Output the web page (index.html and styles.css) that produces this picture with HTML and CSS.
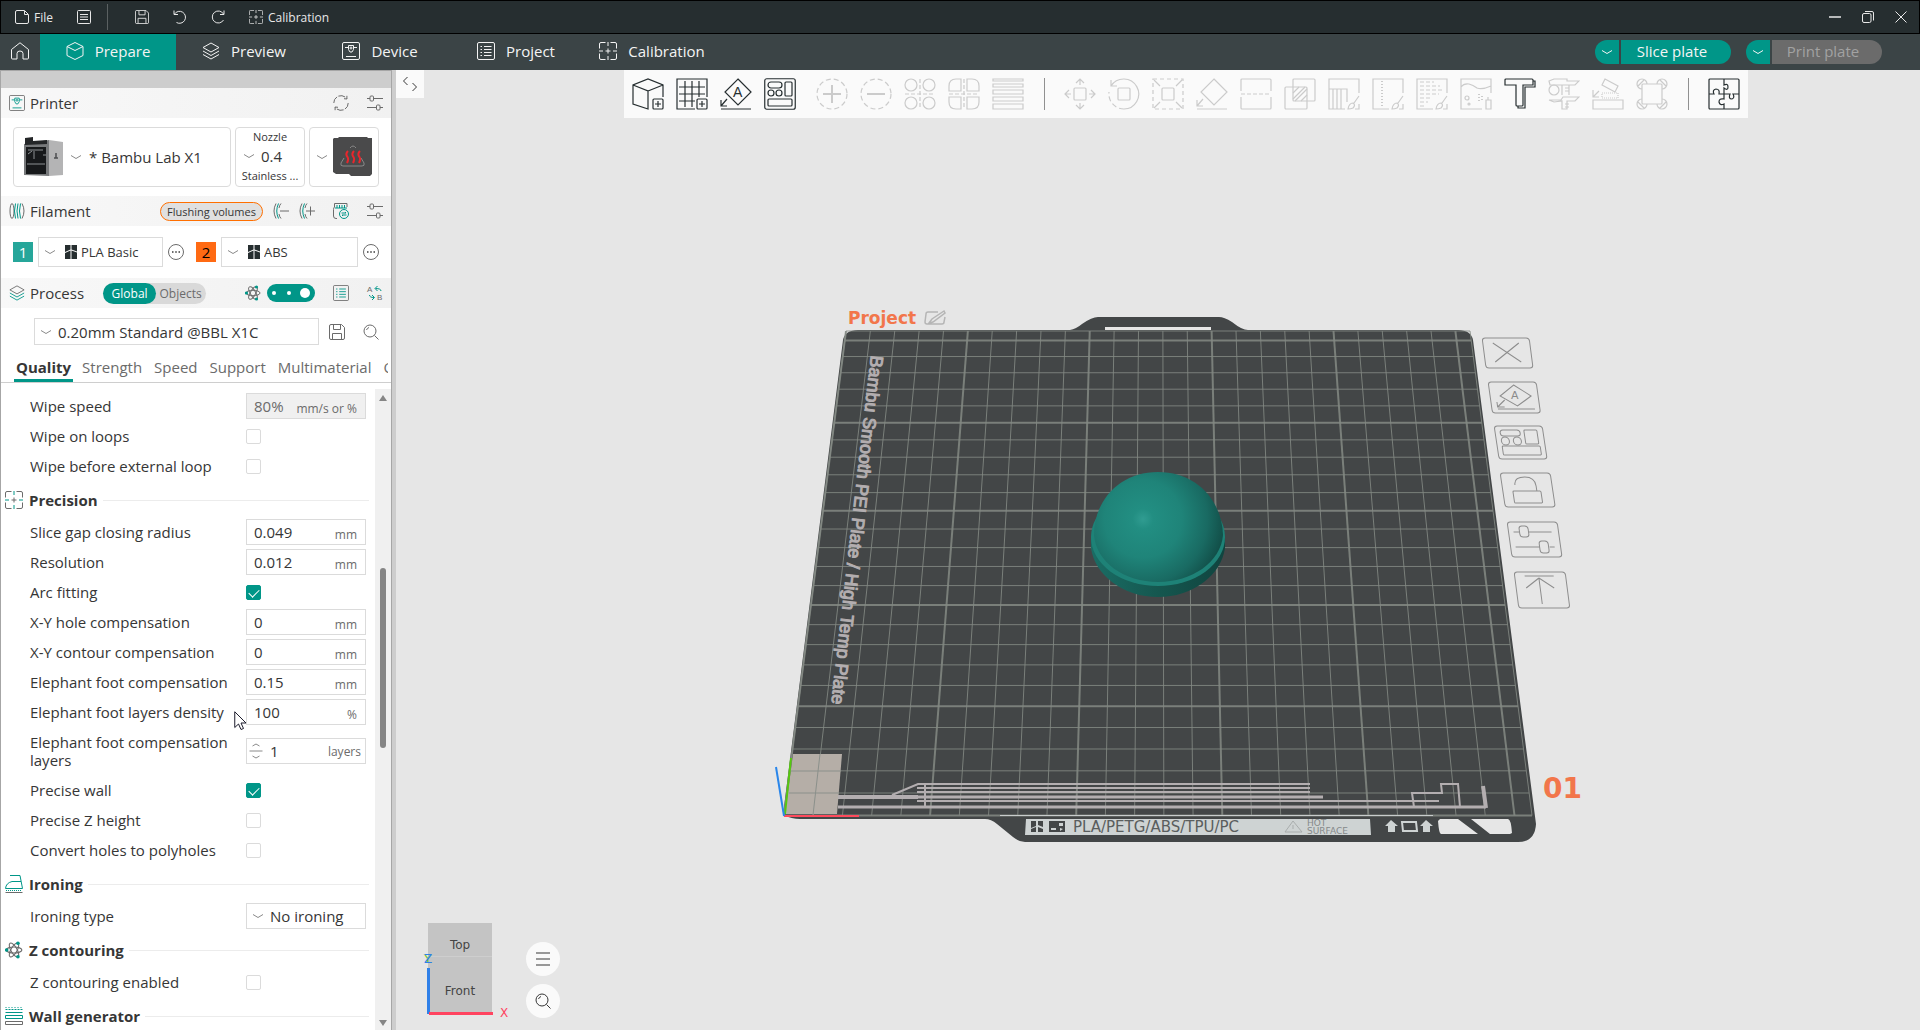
FILE: index.html
```html
<!DOCTYPE html>
<html lang="en">
<head>
  <meta charset="UTF-8" />
  <title>Project</title>
  <link rel="stylesheet" href="styles.css">
</head>
<body>
  <!-- shared icons -->
  <svg class="defs" aria-hidden="true">
    <symbol id="i-chevron" viewBox="0 0 12 6"><path d="M1 1.5L6 4.5L11 1.5" /></symbol>
    <symbol id="i-save" viewBox="0 0 16 16"><path d="M.5 2Q.5.5 2 .5H12.5L15.5 3.5V14Q15.5 15.5 14 15.5H2Q.5 15.5 .5 14ZM4.5 1V5.5H11.5V1M3.500 15V9.500H12.500V15" /></symbol>
    <symbol id="i-calib" viewBox="0 0 18 18"><path class="main" d="M.5 6.500V2Q.5.5 2 .5H6.500M11.500.5H16Q17.500.5 17.500 2V6.500M17.500 11.500V16Q17.500 17.500 16 17.500H11.500M6.500 17.500H2Q.5 17.500 .5 16V11.500M9 6.500V11.500M6.500 9H11.500" /><path class="accent" d="M9 0V4M9 14V18M0 9H4M14 9H18" /></symbol>
    <symbol id="i-layers" viewBox="0 0 18 18"><path class="main" d="M9 1L17 5.500L9 10L1 5.500Z" /><path class="accent" d="M1 9L9 13.500L17 9M1 12.500L9 17L17 12.500" /></symbol>
    <symbol id="i-device" viewBox="0 0 18 18"><rect class="main" x=".5" y=".5" width="17" height="17" rx="1.500" /><path class="accent" d="M3 5.500H6.500M11.500 5.500H15M4 14.500H14M6.500 3.500H11.500V7.500L10 10H8L6.500 7.500Z" /><circle class="accent" cx="9" cy="6" r="1" /></symbol>
    <symbol id="i-list" viewBox="0 0 18 18"><rect class="main" x=".5" y=".5" width="17" height="17" rx="1.500" /><path class="accent" d="M3.500 4.500H5M7 4.500H14.500M3.500 7.500H5M7 7.500H14.500M3.500 10.500H5M7 10.500H14.500M3.500 13.500H5M7 13.500H14.500" /></symbol>
    <symbol id="i-sliders" viewBox="0 0 16 16"><path d="M0 3.500H3M7 3.500H16M0 12.500H9M13 12.500H16" /><rect x="3" y="1" width="3.500" height="5" rx="1" /><rect x="9.500" y="10" width="3.500" height="5" rx="1" /></symbol>
    <symbol id="i-search" viewBox="0 0 16 16"><circle cx="7" cy="7" r="6" /><path d="M11.500 11.500L15.500 15.500M3.500 6A4 4 0 0 1 6 3.500" /></symbol>
    <symbol id="i-more" viewBox="0 0 16 16"><circle cx="8" cy="8" r="7.500" /><path class="heavy" d="M4 8H5.500M7.250 8H8.750M10.500 8H12" /></symbol>
    <symbol id="i-atom" viewBox="0 0 16 16"><ellipse class="main" cx="8" cy="8" rx="7" ry="2.700" /><ellipse class="main" cx="8" cy="8" rx="7" ry="2.700" transform="rotate(60 8 8)" /><ellipse class="main" cx="8" cy="8" rx="7" ry="2.700" transform="rotate(120 8 8)" /><circle class="dot" cx="1.500" cy="8" r="1.600" /><circle class="dot" cx="11.500" cy="2" r="1.600" /><circle class="dot" cx="11.500" cy="14" r="1.600" /></symbol>
    <symbol id="i-bambu" viewBox="0 0 12 14"><path d="M0 0H5.500V4.500L0 7ZM6.500 0H12V6.500L6.500 4.500ZM0 8L5.500 5.500V14H0ZM6.500 5.500L12 7.500V14H6.500Z" /></symbol>
    <symbol id="i-arrange" viewBox="0 0 32 32"><rect x=".75" y=".75" width="30.500" height="30.500" rx="2" /><rect x="4" y="4" width="14" height="6" rx="3" /><circle cx="7" cy="15" r="3" /><circle cx="15" cy="15" r="3" /><rect x="21" y="4" width="7" height="14" rx="1" /><rect x="4" y="21" width="24" height="7" rx="1" /></symbol>
  </svg>

  <header class="titlebar">
    <button class="tb-btn"><svg class="icon14" viewBox="0 0 14 14"><path d="M.5 2Q.5.5 2 .5H9.500L13.500 4.500V12Q13.500 13.500 12 13.500H2Q.5 13.500 .5 12ZM9.500 1V4.500H13" /></svg>File</button>
    <button class="tb-btn" aria-label="Menu"><svg class="icon14" viewBox="0 0 14 14"><rect x=".5" y=".5" width="13" height="13" rx="1" /><path d="M3 4.500H11M3 7H11M3 9.500H11" /></svg></button>
    <span class="tb-sep"></span>
    <button class="tb-btn" aria-label="Save"><svg class="icon14"><use href="#i-save" /></svg></button>
    <button class="tb-btn" aria-label="Undo"><svg class="icon14" viewBox="0 0 14 14"><path d="M1 .5V4.500H5M1.500 4A6 6 0 1 1 3.500 12.500" /></svg></button>
    <button class="tb-btn" aria-label="Redo"><svg class="icon14" viewBox="0 0 14 14"><path d="M13 .5V4.500H9M12.500 4A6 6 0 1 0 12.500 10" /></svg></button>
    <button class="tb-btn"><svg class="icon14"><use href="#i-calib" /></svg>Calibration</button>
    <div class="window-btns">
      <button aria-label="Minimize"><svg class="icon14" viewBox="0 0 14 14"><path d="M1 7H13" stroke-width="1.500" /></svg></button>
      <button aria-label="Restore"><svg class="icon14" viewBox="0 0 14 14"><rect x="1.500" y="3.500" width="8.500" height="9" rx="1.500" /><path d="M4 1.500H11Q12.500 1.500 12.500 3V10.500" /></svg></button>
      <button aria-label="Close"><svg class="icon14" viewBox="0 0 14 14"><path d="M1.500 1.500L12.500 12.500M12.500 1.500L1.500 12.500" /></svg></button>
    </div>
  </header>

  <nav class="nav">
    <a class="home" href="#" aria-label="Home"><svg class="icon18" viewBox="0 0 18 18"><path d="M.5 7.500L9 .75L17.500 7.500V16Q17.500 17 16.500 17H12V11.500Q12 9 9 9Q6 9 6 11.500V17H1.500Q.5 17 .5 16Z" /></svg></a>
    <a class="tab active" href="#"><svg class="icon18" viewBox="0 0 18 18"><path d="M9 .5L17 4.500V13.500L9 17.500L1 13.500V4.500ZM1 4.500L9 8.500L17 4.500" /></svg>Prepare</a>
    <a class="tab" href="#"><svg class="icon18"><use href="#i-layers" /></svg>Preview</a>
    <a class="tab" href="#"><svg class="icon18"><use href="#i-device" /></svg>Device</a>
    <a class="tab" href="#"><svg class="icon18"><use href="#i-list" /></svg>Project</a>
    <a class="tab" href="#"><svg class="icon18"><use href="#i-calib" /></svg>Calibration</a>
    <div class="actions">
      <div class="split">
        <button class="split-menu" aria-label="Slice options"><svg class="chev"><use href="#i-chevron" /></svg></button>
        <button class="split-main">Slice plate</button>
      </div>
      <div class="split">
        <button class="split-menu" aria-label="Print options"><svg class="chev"><use href="#i-chevron" /></svg></button>
        <button class="split-main" disabled>Print plate</button>
      </div>
    </div>
  </nav>

  <div class="workspace">
    <aside class="sidebar">
      <div class="side-top"></div>

      <div class="side-head">
        <svg class="icon16 duo"><use href="#i-device" /></svg>
        <h2>Printer</h2>
        <div class="head-tools">
          <button aria-label="Sync"><svg class="icon16" viewBox="0 0 16 16"><path d="M.8 8A7.200 7.200 0 0 1 13.700 3.500M15.200 8A7.200 7.200 0 0 1 2.300 12.500" stroke-dasharray="7 1.500" /><path d="M13.900 .8V4L11 3.700M2.100 15.200V12L5 12.300" /></svg></button>
          <button aria-label="Printer settings"><svg class="icon16"><use href="#i-sliders" /></svg></button>
        </div>
      </div>

      <div class="cards">
        <label class="card card-printer">
          <svg class="pic" viewBox="0 0 40 40" aria-hidden="true">
            <path class="pic-front" d="M1 7L26 3V39L1 38Z" />
            <path class="pic-side" d="M26 3L40 5V38L26 39Z" />
            <rect x="3" y="10" width="20" height="27" fill="#17191b" />
            <path d="M2 1L10 0V4L24 3V7L2 8Z" fill="#242628" />
            <path d="M5 13H20M5 17L9 14M11 14V22M4 27H22M20 18H23" stroke="#8d9194" />
            <path d="M33 16V21M31 21H35" stroke="#4c4e50" stroke-width="1.500" />
          </svg>
          <svg class="chev"><use href="#i-chevron" /></svg>
          <select aria-label="Printer"><option>* Bambu Lab X1</option></select>
        </label>
        <label class="card card-nozzle">
          <span>Nozzle</span>
          <span class="nozzle-size"><svg class="chev"><use href="#i-chevron" /></svg><select aria-label="Nozzle diameter"><option>0.4</option></select></span>
          <span>Stainless ...</span>
        </label>
        <button class="card card-bed" aria-label="Plate type">
          <svg class="chev"><use href="#i-chevron" /></svg>
          <svg class="pic" viewBox="0 0 40 40" aria-hidden="true">
            <path d="M1 1H5L6 0H34L35 1H39V37L37 39H18L16 37H3L0 35V2Z" fill="#4a4a4b" />
            <path d="M11 21L8 26Q7 29 10 29H29Q32 29 31 26L28 21M17 11Q20 7 23 11" fill="none" stroke="#888" />
            <path d="M15 14Q12 17 14.500 20Q16 22 14 26M21 14Q18 17 20.500 20Q22 22 20 26M27 14Q24 17 26.500 20Q28 22 26 26" fill="none" stroke="#e8262c" stroke-width="2" />
          </svg>
        </button>
      </div>

      <div class="side-head">
        <svg class="icon16" viewBox="0 0 16 16"><ellipse cx="3" cy="8" rx="2" ry="7.500" /><path class="teal" d="M6.500 .5Q4.500 8 6.500 15.500M9 .5Q7 8 9 15.500M11.500 .5Q9.500 8 11.500 15.500" /><path d="M13 .5Q17 8 13 15.500" /></svg>
        <h2>Filament</h2>
        <div class="head-tools">
          <button class="flush">Flushing volumes</button>
          <button aria-label="Remove filament"><svg class="icon16" viewBox="0 0 16 16"><path d="M3 .5Q-1 8 3 15.500M7 8H16" /><path class="teal" d="M5.500 .5Q2 8 5.500 15.500" /><path d="M8 .5Q6.500 2 6 5M6 11Q6.500 14 8 15.500" /></svg></button>
          <button aria-label="Add filament"><svg class="icon16" viewBox="0 0 16 16"><path d="M3 .5Q-1 8 3 15.500M7 8H16M11.500 3.500V12.500" /><path class="teal" d="M5.500 .5Q2 8 5.500 15.500" /><path d="M8 .5Q6.500 2 6 5M6 11Q6.500 14 8 15.500" /></svg></button>
          <button class="wide-gap" aria-label="Sync filaments"><svg class="icon16" viewBox="0 0 16 16"><path d="M14 4V.5H1.500V4Q.5 5 .5 6.500V13Q.5 15.500 3 15.500H4" /><path class="teal" d="M4 2V5M6.500 2V5M9 2V5M11.500 2V5M2 5H14" /><circle class="teal" cx="11" cy="11" r="4.500" /><path class="teal" d="M8.500 10H13L12 9M13.500 12H9L10 13" /></svg></button>
          <button aria-label="Filament settings"><svg class="icon16"><use href="#i-sliders" /></svg></button>
        </div>
      </div>

      <div class="filaments">
        <button class="swatch swatch-1">1</button>
        <label class="pick pick-1"><svg class="chev"><use href="#i-chevron" /></svg><svg class="brand"><use href="#i-bambu" /></svg><select aria-label="Filament 1"><option>PLA Basic</option></select></label>
        <button aria-label="Filament 1 menu"><svg class="icon16"><use href="#i-more" /></svg></button>
        <button class="swatch swatch-2">2</button>
        <label class="pick pick-2"><svg class="chev"><use href="#i-chevron" /></svg><svg class="brand"><use href="#i-bambu" /></svg><select aria-label="Filament 2"><option>ABS</option></select></label>
        <button aria-label="Filament 2 menu"><svg class="icon16"><use href="#i-more" /></svg></button>
      </div>

      <div class="side-head">
        <svg class="icon16 duo"><use href="#i-layers" /></svg>
        <h2>Process</h2>
        <div class="scope"><button class="on">Global</button><button>Objects</button></div>
        <div class="head-tools">
          <svg class="icon16 duo"><use href="#i-atom" /></svg>
          <button class="mode" aria-label="Expert mode"><i></i><i></i><b></b></button>
          <button class="wide-gap" aria-label="Compare list"><svg class="icon16 duo"><use href="#i-list" /></svg></button>
          <button aria-label="Compare presets"><svg class="icon16" viewBox="0 0 16 16"><text x="0" y="7">A</text><text x="10" y="15">B</text><path class="teal" d="M14 6Q14 3.500 8.500 3.500M10.500 1L8 3.500L10.500 6M2.500 10Q2.500 12.500 7 12.500M5 10L7.500 12.500L5 15" /></svg></button>
        </div>
      </div>

      <div class="preset">
        <label class="pick pick-preset"><svg class="chev"><use href="#i-chevron" /></svg><select aria-label="Process preset"><option>0.20mm Standard @BBL X1C</option></select></label>
        <button aria-label="Save preset"><svg class="icon16"><use href="#i-save" /></svg></button>
        <button aria-label="Search settings"><svg class="icon16"><use href="#i-search" /></svg></button>
      </div>

      <div class="pages">
        <a class="on" href="#">Quality</a>
        <a href="#">Strength</a>
        <a href="#">Speed</a>
        <a href="#">Support</a>
        <a href="#">Multimaterial</a>
        <a href="#">Others</a>
      </div>

      <div class="settings">
        <div class="params">
          <div class="row"><label for="wipe-speed">Wipe speed</label><span class="field off"><input id="wipe-speed" type="text" value="80%" disabled><span>mm/s or %</span></span></div>
          <div class="row"><label for="wipe-loops">Wipe on loops</label><input id="wipe-loops" type="checkbox"></div>
          <div class="row"><label for="wipe-ext">Wipe before external loop</label><input id="wipe-ext" type="checkbox"></div>

          <h3><svg class="icon18 duo"><use href="#i-calib" /></svg>Precision</h3>
          <div class="row"><label for="gap">Slice gap closing radius</label><span class="field"><input id="gap" type="text" value="0.049"><span>mm</span></span></div>
          <div class="row"><label for="res">Resolution</label><span class="field"><input id="res" type="text" value="0.012"><span>mm</span></span></div>
          <div class="row"><label for="arc">Arc fitting</label><input id="arc" type="checkbox" checked></div>
          <div class="row"><label for="xyh">X-Y hole compensation</label><span class="field"><input id="xyh" type="text" value="0"><span>mm</span></span></div>
          <div class="row"><label for="xyc">X-Y contour compensation</label><span class="field"><input id="xyc" type="text" value="0"><span>mm</span></span></div>
          <div class="row"><label for="efc">Elephant foot compensation</label><span class="field"><input id="efc" type="text" value="0.15"><span>mm</span></span></div>
          <div class="row"><label for="efd">Elephant foot layers density</label><span class="field"><input id="efd" type="text" value="100"><span>%</span></span></div>
          <div class="row tall"><label for="efl">Elephant foot compensation layers</label><span class="field spin">
            <svg class="stepper" viewBox="0 0 14 18"><path d="M3.500 4L7 2L10.500 4M.5 9H13.500M3.500 14L7 16L10.500 14" /></svg>
            <input id="efl" type="text" value="1"><span>layers</span></span></div>
          <div class="row"><label for="pw">Precise wall</label><input id="pw" type="checkbox" checked></div>
          <div class="row"><label for="pz">Precise Z height</label><input id="pz" type="checkbox"></div>
          <div class="row"><label for="poly">Convert holes to polyholes</label><input id="poly" type="checkbox"></div>

          <h3><svg class="icon18" viewBox="0 0 18 18"><path class="teal" d="M5 .5H15L17.500 13.500H.5Q1 8 7 6.500H16" /><path class="teal" d="M1 15.500H17" stroke-dasharray="1 1" /><path d="M.5 17.500H17.500" /></svg>Ironing</h3>
          <div class="row"><label for="iron">Ironing type</label><span class="pick pick-param"><svg class="chev"><use href="#i-chevron" /></svg><select id="iron"><option>No ironing</option></select></span></div>

          <h3><svg class="icon18 duo"><use href="#i-atom" /></svg>Z contouring</h3>
          <div class="row"><label for="zc">Z contouring enabled</label><input id="zc" type="checkbox"></div>

          <h3><svg class="icon18" viewBox="0 0 18 18"><path class="teal" d="M.5 .5H17.500" stroke-dasharray="1 2" /><path class="teal" d="M.5 2.500H17.500" stroke-dasharray="2 1" /><path class="teal" d="M.5 5.500H17.500M.5 8.500H17.500V11.500H.5Z" /><path d="M.5 14.500H17.500V17.500H.5Z" /></svg>Wall generator</h3>
        </div>
        <div class="scroll"><i class="up"></i><i class="thumb"></i><i class="down"></i></div>
      </div>
      <svg class="cursor" viewBox="0 0 14 20"><path d="M.75 .75V16.500L4.500 13L7 18.500L9.500 17.500L7 12H12Z" /></svg>
    </aside>

    <main class="canvas">
      <svg class="scene" viewBox="396 70 1524 960" preserveAspectRatio="xMidYMid slice">
        <defs>
          <radialGradient id="dome" gradientUnits="userSpaceOnUse" cx="1143" cy="519" r="86">
            <stop offset="0" stop-color="#309c91" />
            <stop offset=".12" stop-color="#228e82" />
            <stop offset=".45" stop-color="#1f8479" />
            <stop offset=".75" stop-color="#196a62" />
            <stop offset="1" stop-color="#104842" />
          </radialGradient>
          <linearGradient id="base" x1="0" x2="1"><stop offset="0" stop-color="#1a6d65" /><stop offset=".5" stop-color="#15574f" /><stop offset="1" stop-color="#10443f" /></linearGradient>
        </defs>

        <!-- build plate -->
        <path fill="#434647" d="M843 340Q845 330 858 330H1070Q1076 329 1082 324Q1092 317 1098 317H1219Q1224 317 1232 322Q1242 330 1248 330H1458Q1471 330 1473 340L1536 824Q1535 842 1518 842H1025Q1019 842 1013 837L997 824Q991 819 985 819H800Q792 819 783 815Z" />
        <path fill="#e6e6e6" d="M1105 327H1211V330H1105Z" />
        <path fill="none" stroke="#8b8f8d" d="M784 816L846 331" />
        <g id="grid" fill="none" stroke="#848984" stroke-opacity=".85"></g>
        <path fill="#b5aea7" d="M793 754H842L837 814H785Z" />
        <path fill="none" stroke="#8b908b" d="M820 754L813 815M791 771H841M789 793H839" />
        <g fill="none" stroke="#b3aeb0" stroke-width="2">
          <path d="M892 795L918 784H1310M917 788H1310M917 792H1310M917 801H1439M925 784V807" />
          <path stroke-width="3" d="M917 797H1323M838 807H1486" />
          <path stroke-width="4" d="M838 797H918M1483 786L1486 808" />
          <path d="M1414 807L1412 793H1442L1441 784H1458L1460 807" />
        </g>
        <text class="plate-name" transform="translate(871 355) rotate(96.500)">Bambu Smooth PEI Plate / High Temp Plate</text>
        <path stroke="#c8cccc" d="M1000 815.500H1433" />
        <path fill="#ced3d3" d="M1026 819H1370L1371 835H1025Z" />
        <g fill="#434647"><path d="M1031 821H1036V826L1031 828ZM1038 821H1043V827L1038 825ZM1031 829L1036 827V832H1031ZM1038 827L1043 829V832H1038Z" /><path d="M1049 821H1065V832H1049ZM1051 828V830H1056V828ZM1059 823V826H1063V823ZM1060 828V831L1063 829Z" fill-rule="evenodd" /></g>
        <text class="plate-label" x="1073" y="832">PLA/PETG/ABS/TPU/PC</text>
        <path fill="none" stroke="#a9adad" d="M1285 832L1293 821L1302 832ZM1293 825V829" />
        <text class="plate-note" x="1307" y="826">HOT</text>
        <text class="plate-note" x="1307" y="834">SURFACE</text>
        <g fill="#ced3d3"><path d="M1385 826L1391 820L1398 826H1395V832H1388V826ZM1420 826L1426 820L1433 826H1430V832H1423V826Z" /><path fill="none" stroke="#ced3d3" stroke-width="2" d="M1402 822H1416L1417 831H1403Z" /></g>
        <path fill="#e6e6e6" d="M1440 819H1458L1478 834H1441Q1439 834 1438 821ZM1471 819H1508Q1511 819 1512 833L1510 834H1490Z" />
        <path stroke="#ff4a5c" stroke-width="2" d="M784 816H859" />
        <path stroke="#56c80f" stroke-width="2" d="M785 814L791 758" />
        <path stroke="#2a86ea" stroke-width="2" d="M784 816L776 767" />

        <text class="plate-title" x="848" y="324">Project</text>
        <path fill="none" stroke="#b5b5b5" stroke-width="1.500" d="M938 312H928Q926 312 926 314L925 322Q925 324 927 324H942Q944 324 944 322L945 317M929 323L932 319L944 311L945 313L933 322Z" />
        <text class="plate-number" x="1543" y="798">01</text>

        <!-- model -->
        <path fill="url(#base)" d="M1091 538V548Q1094 568 1112 582Q1132 597 1158 597Q1184 597 1204 582Q1222 568 1225 548V538Z" />
        <ellipse cx="1158" cy="537" rx="67" ry="49" fill="#1e8277" />
        <path fill="url(#dome)" d="M1094 535C1094 500 1120 472 1158 472C1196 472 1222 500 1223 535C1221 562 1192 582 1158 582C1124 582 1096 562 1094 535Z" />

        <!-- plate tools -->
        <g class="plate-tools">
          <g transform="matrix(1 0 .13 1 1481 337)"><rect x="1" y="1" width="47" height="30" rx="3" /><path d="M11 6L37 25M37 6L11 25" /></g>
          <g transform="matrix(1 0 .14 1 1487 381)"><rect x="1" y="1" width="48" height="31" rx="3" /><path d="M26 4L42 15L27 25L11 15ZM7 28H44M15 19L7 26M7 21V26H14" /></g>
          <g transform="matrix(1 0 .15 1 1493 425)"><rect x="1" y="1" width="48" height="33" rx="3" /><rect x="6" y="5" width="20" height="6" rx="3" /><circle cx="10" cy="16" r="4" /><circle cx="22" cy="16" r="4" /><rect x="30" y="5" width="13" height="14" rx="1" /><rect x="6" y="21" width="38" height="9" rx="1" /></g>
          <g transform="matrix(1 0 .15 1 1499 472)"><rect x="1" y="1" width="50" height="34" rx="3" /><rect x="11" y="19" width="28" height="12" rx="1" /><path d="M14 13Q14 5 25 5Q35 5 35 14V19" /></g>
          <g transform="matrix(1 0 .14 1 1506 521)"><rect x="1" y="1" width="50" height="35" rx="3" /><path d="M6 11H12M21 11H44M6 26H30M40 26H45" /><rect x="12" y="5" width="9" height="11" rx="3" /><rect x="30" y="20" width="9" height="12" rx="3" /></g>
          <g transform="matrix(1 0 .13 1 1513 571)"><rect x="1" y="1" width="51" height="36" rx="3" /><path d="M11 5H40M25 7V33M25 7L11 17M25 7L39 17" /></g>
        </g>
        <text class="plate-a" x="1511" y="399">A</text>

        <!-- view cube -->
        <path fill="#c4c4c4" d="M428 923H492V1013H428Z" />
        <path stroke="#cecece" d="M428 956.500H492" />
        <text class="cube" x="460" y="949">Top</text>
        <text class="cube" x="460" y="995">Front</text>
        <path stroke="#2f80e8" stroke-width="3" d="M428.500 968V1014" />
        <path stroke="#ff4460" stroke-width="3" d="M429 1013.500H493" />
        <text class="axis" x="424" y="963" fill="#6cc51d">Y</text>
        <text class="axis" x="424" y="963" fill="#2f80e8">Z</text>
        <text class="axis" x="500" y="1017" fill="#ff4460">X</text>
      </svg>

      <button class="collapse" aria-label="Collapse sidebar"><svg class="icon16" viewBox="0 0 16 16"><path d="M5.500 1L1.500 5L5.500 9M10.500 7L14.500 11L10.500 15" /></svg></button>

      <div class="toolbar">
        <button aria-label="Add"><svg viewBox="0 0 32 32"><path d="M31 19V7L16 1L1 7V26L16 31V13L1 7M16 13L31 7" /><rect x="21" y="21" width="10" height="10" rx="1" /><path d="M26 23V29M23 26H29" /></svg></button>
        <button aria-label="Add plate"><svg viewBox="0 0 32 32"><path d="M31 19V1H1V31H19M9 3V29M16 3V29M23 3V19M3 9H29M3 16H29M3 23H19" /><rect x="21" y="21" width="10" height="10" rx="1" /><path d="M26 23V29M23 26H29" /></svg></button>
        <button aria-label="Auto orient"><svg viewBox="0 0 32 32"><path d="M18 1L31 14L18 27L5 14ZM1 31H31M7 21L1 28M1 22V28H7" /><text x="13" y="19">A</text></svg></button>
        <button aria-label="Arrange"><svg><use href="#i-arrange" /></svg></button>
        <button class="first" disabled aria-label="Add instance"><svg viewBox="0 0 32 32"><circle cx="16" cy="16" r="15" stroke-dasharray="5 3" /><path class="heavy" d="M16 7V25M7 16H25" /></svg></button>
        <button disabled aria-label="Remove instance"><svg viewBox="0 0 32 32"><circle cx="16" cy="16" r="15" stroke-dasharray="5 3" /><path class="heavy" d="M7 16H25" /></svg></button>
        <button disabled aria-label="Split to objects"><svg viewBox="0 0 32 32"><circle cx="7" cy="7" r="6" /><circle cx="25" cy="7" r="6" /><circle cx="7" cy="25" r="6" /><circle cx="25" cy="25" r="6" /><path d="M16 1V31M1 16H31" stroke-dasharray="4 2" /></svg></button>
        <button disabled aria-label="Split to parts"><svg viewBox="0 0 32 32"><path d="M13 1V13H1V8Q1 1 8 1ZM19 1H24Q31 1 31 8V13H19ZM1 19H13V31H8Q1 31 1 24ZM19 19H31V24Q31 31 24 31H19Z" /><path d="M16 1V31M1 16H31" stroke-dasharray="4 2" /></svg></button>
        <button disabled aria-label="Variable layer height"><svg viewBox="0 0 32 32"><path d="M1 1H31V3H1ZM1 6H31V9H1ZM1 12H31V16H1ZM1 19H31V23H1ZM1 26H31V31H1Z" /></svg></button>
        <span class="sep"></span>
        <button disabled aria-label="Move"><svg viewBox="0 0 32 32"><rect x="10" y="10" width="12" height="12" rx="1" /><path d="M16 1V7M12 5L16 1L20 5M16 25V31M12 27L16 31L20 27M7 16H1M5 12L1 16L5 20M25 16H31M27 12L31 16L27 20" /></svg></button>
        <button disabled aria-label="Rotate"><svg viewBox="0 0 32 32"><rect x="10" y="10" width="12" height="12" rx="1" /><path d="M3 8A15 15 0 1 1 16 31M3 2V8H9" /><path d="M16 31A15 15 0 0 1 1 14" stroke-dasharray="5 3" /></svg></button>
        <button disabled aria-label="Scale"><svg viewBox="0 0 32 32"><rect x="10" y="10" width="12" height="12" rx="1" /><rect x="1" y="1" width="30" height="30" stroke-dasharray="4 3" /><path d="M8 8L2 2M24 8L30 2M8 24L2 30M24 24L30 30" /></svg></button>
        <button disabled aria-label="Lay on face"><svg viewBox="0 0 32 32"><path d="M18 1L31 14L18 27L5 14ZM1 31H31M7 21L1 28M1 22V28H7" /></svg></button>
        <button disabled aria-label="Cut"><svg viewBox="0 0 32 32"><path d="M1 13V2Q1 1 2 1H30Q31 1 31 2V13M1 19V30Q1 31 2 31H30Q31 31 31 30V19" /><path d="M1 16H31" stroke-dasharray="4 2" /></svg></button>
        <button disabled aria-label="Mesh boolean"><svg viewBox="0 0 32 32"><rect x="9" y="1" width="22" height="22" rx="1" /><rect x="1" y="9" width="22" height="22" rx="1" /><path d="M9 15L15 9M9 21L21 9M11 23L23 11M17 23L23 17" /></svg></button>
        <button disabled aria-label="Support painting"><svg viewBox="0 0 32 32"><path d="M31 15V1H1V31H5V11H19V24M1 11H5M9 11V31M13 11V31M5 31H17M20 31Q21 25 25 25Q28 27 25 30Q23 31 20 31ZM26 25L31 18M31 26V31H27" /></svg></button>
        <button disabled aria-label="Seam painting"><svg viewBox="0 0 32 32"><path d="M31 15V1H1V31H17M20 31Q21 25 25 25Q28 27 25 30Q23 31 20 31ZM26 25L31 18M31 26V31H27" /><path d="M10 3V29" stroke-dasharray="1 2" stroke-width="2" /></svg></button>
        <button disabled aria-label="Color painting"><svg viewBox="0 0 32 32"><path d="M31 15V1H1V31H17M20 31Q21 25 25 25Q28 27 25 30Q23 31 20 31ZM26 25L31 18M31 26V31H27" /><path d="M4 4H18M4 8H24M4 12H26M4 16H23M4 20H16M4 24H12M4 28H9" stroke-dasharray="4 2" /></svg></button>
        <button disabled aria-label="Fuzzy skin painting"><svg viewBox="0 0 32 32"><path d="M31 15V1H1V31H22M1 9Q4 5 9 6Q13 7 17 10Q22 12 31 8M26 22H31V31H26ZM28 19V22" /><circle cx="7" cy="20" r="2" /><circle cx="9" cy="26" r="1" /><path d="M19 16V25M22 18V23" stroke-dasharray="1 2" stroke-width="2" /></svg></button>
        <button aria-label="Text"><svg viewBox="0 0 32 32"><path d="M2 1H28Q29 1 29 2V7H19V27Q19 28 18 28H13Q12 28 12 27V7H1V2Q1 1 2 1ZM29 3H31V9H21V30H14V28" /></svg></button>
        <button disabled aria-label="Measure"><svg viewBox="0 0 32 32"><path d="M1 3L6 1H19V3H31L27 7H2ZM1 22H13L15 19H31L27 23H19V31H14V23L6 24L1 22M14 7V17M21 7V17M17 10H21M17 13H21M17 26H21M17 29H21" /><circle cx="6" cy="12" r="5" /></svg></button>
        <button disabled aria-label="Assembly"><svg viewBox="0 0 32 32"><path d="M13 1L26 8L23 14L10 7ZM1 22H31V31H1ZM7 13L1 19M1 12V19H7" /><path d="M10 20H26V15H10Z" stroke-dasharray="1 1" /></svg></button>
        <button disabled aria-label="Brim ears"><svg viewBox="0 0 32 32"><rect x="6" y="6" width="20" height="20" rx="1" /><path d="M6 11A5 5 0 1 1 11 6M21 6A5 5 0 1 1 26 11M26 21A5 5 0 1 1 21 26M11 26A5 5 0 1 1 6 21M2 8L8 2M24 2L30 8M2 24L8 30M24 30L30 24" /></svg></button>
        <span class="sep"></span>
        <button aria-label="Assembly view"><svg viewBox="0 0 32 32"><rect x="1" y="1" width="30" height="30" rx="1" /><path d="M16 1V7Q20 5 20 9Q20 13 16 10V16H11Q12 11 8 11Q4 12 6 16H1M16 16H22Q20 21 24 21Q27 20 25 16H31M16 16V21Q11 20 11 24Q12 28 16 26V31" /></svg></button>
      </div>

      <div class="view-btns">
        <button aria-label="View options"><svg class="icon16" viewBox="0 0 16 16"><path d="M1 2H15M1 8H15M1 14H15" /></svg></button>
        <button aria-label="Zoom"><svg class="icon16"><use href="#i-search" /></svg></button>
      </div>
    </main>
  </div>

  <script src="scene.js"></script>
</body>
</html>
```

FILE: styles.css
```css
* {
  box-sizing: border-box;
}
body {
  margin: 0;
  height: 100vh;
  display: flex;
  flex-direction: column;
  overflow: hidden;
  font-family: "Open Sans", "Noto Sans", sans-serif;
  font-size: 15px;
  color: #363636;
  background: #e6e6e6;
}
button {
  display: flex;
  align-items: center;
  justify-content: center;
  padding: 0;
  border: 0;
  background: none;
  color: inherit;
  font: inherit;
}
a {
  color: inherit;
  text-decoration: none;
}
svg {
  flex: none;
  fill: none;
  stroke: currentColor;
}
select,
input {
  font: inherit;
  color: inherit;
}
select {
  appearance: none;
  flex: 1;
  min-width: 0;
  padding: 0;
  border: 0;
  background: none;
}
.defs {
  position: absolute;
  width: 0;
  height: 0;
}
.icon14 { width: 14px; height: 14px; }
.icon16 { width: 16px; height: 16px; }
.icon18 { width: 18px; height: 18px; }
.chev { width: 12px; height: 6px; }
.duo { --accent: #009688; }
.accent { stroke: var(--accent, currentColor); }
.dot { fill: #009688; stroke: none; }
.teal { stroke: #009688; }
.heavy { stroke-width: 2; }

/* title bar */
.titlebar {
  display: flex;
  align-items: center;
  gap: 24px;
  height: 34px;
  padding: 0 11px 0 14px;
  border: 1px solid #000;
  background: #262e30;
  color: #e8e8e8;
  font-size: 12px;
}
.tb-btn {
  gap: 5px;
}
.tb-sep {
  width: 1px;
  height: 26px;
  margin: 0 3px 0 -8px;
  background: #5b6162;
}
.window-btns {
  display: flex;
  gap: 19px;
  margin-left: auto;
}

/* main tabs */
.nav {
  display: flex;
  height: 36px;
  background: #3b4446;
  color: #f4f4f4;
}
.home,
.tab {
  display: flex;
  align-items: center;
  justify-content: center;
  padding-bottom: 2px;
}
.home {
  width: 40px;
}
.tab {
  width: 136px;
  gap: 11px;
}
.tab.active {
  background: #009688;
}
.actions {
  display: flex;
  align-items: center;
  gap: 15px;
  margin-left: auto;
  padding-right: 38px;
}
.split {
  display: flex;
  gap: 2px;
  height: 24px;
}
.split button {
  background: #009688;
}
.split-menu {
  width: 24px;
  border-radius: 12px 0 0 12px;
}
.split .split-main {
  width: 110px;
  padding: 0 8px 2px 0;
  border-radius: 0 12px 12px 0;
}
.split .split-main:disabled {
  background: #6b6b6b;
  color: #a2a2a2;
}

.workspace {
  flex: 1;
  display: flex;
  gap: 4px;
  min-height: 0;
  background: #cdcdcd;
}

/* sidebar */
.sidebar {
  position: relative;
  display: flex;
  flex-direction: column;
  width: 392px;
  border: solid #a6a6a6;
  border-width: 1px 1px 0 1px;
  background: #fff;
}
.side-top {
  height: 17px;
  background: #cdcdcd;
}
.side-head {
  display: flex;
  align-items: center;
  height: 30px;
  padding: 0 8px;
  background: linear-gradient(90deg, #f8f8f8, #f1f1f1);
}
.side-head svg,
.filaments svg,
.preset svg {
  color: #6b6b6b;
  overflow: visible;
}
.side-head h2 {
  margin: 0 0 0 5px;
  font-size: 15px;
  font-weight: 400;
}
.head-tools {
  display: flex;
  align-items: center;
  gap: 10px;
  margin-left: auto;
}
.head-tools button + button:last-child {
  margin-left: 8px;
}
.head-tools .wide-gap {
  margin-left: 8px;
}
.side-head text {
  font: 8px "Liberation Sans", sans-serif;
  fill: #6b6b6b;
  stroke: none;
}
.cards {
  display: flex;
  gap: 4px;
  padding: 9px 12px;
  height: 78px;
}
.card {
  display: flex;
  align-items: center;
  gap: 7px;
  border: 1px solid #dbdbdb;
  border-radius: 4px;
  background: #fff;
}
.card .chev,
.pick .chev {
  color: #8a8a8a;
}
.pic {
  width: 40px;
  height: 40px;
  stroke: none;
}
.pic-front { fill: #77797b; }
.pic-side { fill: #b4b4b5; }
.card-printer {
  flex: 1;
  padding-left: 9px;
}
.card-nozzle {
  flex-direction: column;
  width: 70px;
  gap: 0;
  font-size: 11px;
  line-height: 17px;
}
.nozzle-size {
  display: flex;
  align-self: stretch;
  align-items: center;
  gap: 6px;
  height: 22px;
  padding-left: 7px;
  font-size: 15px;
}
.card-bed {
  width: 70px;
  gap: 5px;
}
.flush {
  height: 19px;
  width: 103px;
  border: 1px solid #ff6f00;
  border-radius: 10px;
  background: #e0e0e0;
  font-size: 11px;
}
.filaments {
  display: flex;
  align-items: center;
  gap: 5px;
  height: 52px;
  padding: 0 12px;
  font-size: 13px;
}
.swatch {
  width: 20px;
  height: 20px;
  font-size: 15px;
}
.swatch-1 {
  background: #26a69a;
  color: #fff;
}
.swatch-2 {
  margin-left: 7px;
  background: #ff6a13;
  color: #000;
}
.pick {
  display: flex;
  align-items: center;
  height: 30px;
  padding-left: 5px;
  border: 1px solid #dbdbdb;
  background: #fff;
}
.pick .brand {
  width: 12px;
  height: 14px;
  margin: 0 4px 0 9px;
  fill: #262e30;
  stroke: none;
}
.pick-1 { width: 125px; }
.pick-2 { flex: 1; }
.scope {
  display: flex;
  height: 21px;
  width: 103px;
  margin-left: 19px;
  border-radius: 11px;
  background: #d9d9d9;
  font-size: 12px;
  color: #6b6b6b;
}
.scope button {
  width: 49px;
}
.scope .on {
  width: 53px;
  border-radius: 11px;
  background: #009688;
  color: #fff;
}
.mode {
  gap: 11px;
  width: 48px;
  height: 18px;
  margin-left: -4px;
  border-radius: 9px;
  background: #009688;
}
.mode i {
  width: 4px;
  height: 4px;
  border-radius: 2px;
  background: #fff;
}
.mode b {
  width: 10px;
  height: 10px;
  margin-left: -2px;
  border-radius: 5px;
  background: #fff;
}
.preset {
  display: flex;
  align-items: center;
  gap: 10px;
  padding: 10px 12px 0 33px;
}
.preset button + button {
  margin-left: 8px;
}
.pick-preset {
  flex: 1;
  height: 27px;
  gap: 6px;
}
.pages {
  display: flex;
  height: 37px;
  margin-right: 3px;
  padding-left: 13px;
  gap: 12px;
  overflow: hidden;
  color: #6b6b6b;
  line-height: 45px;
}
.pages .on {
  padding: 0 2px;
  margin-right: -3px;
  border-bottom: 3px solid #009688;
  font-weight: 700;
  color: #363636;
}
.settings {
  flex: 1;
  display: flex;
  min-height: 0;
  border-top: 1px solid #cecece;
}
.params {
  flex: 1;
  padding: 8px 6px 0 5px;
  overflow: hidden;
}
.row {
  display: flex;
  align-items: center;
  height: 30px;
  padding-left: 24px;
}
.row label {
  width: 216px;
  line-height: 18px;
}
.row.tall {
  height: 48px;
}
.params h3 {
  display: flex;
  align-items: center;
  height: 36px;
  margin: 0;
  padding-top: 2px;
  font-size: 15px;
}
.params h3 svg {
  margin-right: 6px;
  margin-left: -1px;
  color: #6b6b6b;
}
.params h3::after {
  content: "";
  flex: 1;
  height: 1px;
  margin-left: 5px;
  background: #ececec;
}
.field,
.pick-param {
  display: flex;
  align-items: center;
  width: 120px;
  height: 26px;
  border: 1px solid #dbdbdb;
  background: #fff;
}
.pick-param {
  gap: 6px;
}
.field input {
  flex: 1;
  min-width: 0;
  padding: 0 0 0 7px;
  border: 0;
  background: none;
}
.field span {
  padding: 4px 8px 0 0;
  font-size: 12px;
  color: #6b6b6b;
}
.field.off {
  background: #f0f0f0;
  color: #6b6b6b;
}
.field.spin span {
  padding: 0 4px 0 0;
}
.stepper {
  width: 14px;
  height: 18px;
  margin-left: 2px;
  color: #8a8a8a;
}
input[type="checkbox"] {
  appearance: none;
  width: 15px;
  height: 15px;
  margin: 0;
  border: 1px solid #dbdbdb;
  border-radius: 2px;
  background: #fff;
}
input[type="checkbox"]:checked {
  border-color: #009688;
  background: #009688;
}
input[type="checkbox"]:checked::after {
  content: "";
  display: block;
  width: 9px;
  height: 5px;
  margin: 3px 2px;
  border: solid #fff;
  border-width: 0 0 1px 1px;
  transform: rotate(-45deg);
}
.scroll {
  position: relative;
  width: 16px;
  margin-top: 6px;
  background: #f0f0f0;
}
.scroll i {
  position: absolute;
  left: 4px;
}
.scroll .up,
.scroll .down {
  border: 4px solid transparent;
}
.scroll .up {
  top: 2px;
  border-bottom: 6px solid #858585;
}
.scroll .down {
  bottom: 0;
  border-top: 6px solid #858585;
}
.scroll .thumb {
  top: 28%;
  left: 5px;
  width: 6px;
  height: 28%;
  border-radius: 3px;
  background: #858585;
}
.cursor {
  position: absolute;
  left: 233px;
  top: 640px;
  width: 14px;
  height: 20px;
  fill: #fff;
  stroke: #1c1c2c;
}

/* 3D view */
.canvas {
  position: relative;
  flex: 1;
  min-width: 0;
  background: #e6e6e6;
}
.scene {
  position: absolute;
  width: 100%;
  height: 100%;
  stroke: none;
}
.scene text {
  font-family: "DejaVu Sans", sans-serif;
}
.scene .plate-name {
  font: 18px "Liberation Sans", sans-serif;
  fill: #b3aeb0;
  stroke: #b3aeb0;
}
.plate-label {
  font-size: 15px;
  fill: #5a5e5e;
}
.plate-note {
  font-size: 9px;
  fill: #85898a;
}
.plate-title,
.plate-number {
  font-weight: 700;
  fill: #f2764b;
}
.plate-title { font-size: 17px; }
.plate-number { font-size: 28px; }
.plate-a {
  font-size: 11px;
  fill: #8a8a8a;
}
.plate-tools {
  fill: none;
  stroke: #8d8d8d;
}
.cube {
  font-size: 12px;
  text-anchor: middle;
  fill: #444;
}
.axis {
  font-size: 12px;
}
.collapse {
  position: absolute;
  width: 28px;
  height: 28px;
  background: #fafafa;
}
.toolbar {
  position: absolute;
  top: 0;
  left: calc(50% + 28px);
  transform: translateX(-50%);
  display: flex;
  align-items: center;
  gap: 12px;
  height: 48px;
  padding: 0 8px;
  background: #fafafa;
  color: #262e30;
}
.toolbar svg {
  width: 32px;
  height: 32px;
  stroke-width: 1.2;
}
.toolbar text {
  font: 14px "Liberation Sans", sans-serif;
  fill: #262e30;
  stroke: none;
}
.toolbar button:disabled {
  color: #cbcbcb;
}
.toolbar .first {
  margin-left: 8px;
}
.toolbar .sep {
  width: 1px;
  height: 32px;
  margin: 0 7px 0 8px;
  background: #909090;
}
.view-btns {
  position: absolute;
  left: 130px;
  bottom: 12px;
  display: flex;
  flex-direction: column;
  gap: 8px;
}
.view-btns button {
  width: 34px;
  height: 34px;
  border-radius: 17px;
  background: #fafafa;
}
```

FILE: scene.js
```js
// Bed grid in perspective, one line every 10 mm on a 256 mm bed.
const BED = 256;
const grid = document.getElementById("grid");

function project(x, y) {
  const w = 1 + (0.1987 / BED) * y;
  return [1158 + ((x - BED / 2) * 2.922) / w, 815.5 - (2.2686 * y) / w];
}

function line(x1, y1, x2, y2, bold) {
  const p = document.createElementNS("http://www.w3.org/2000/svg", "path");
  p.setAttribute("d", "M" + project(x1, y1) + "L" + project(x2, y2));
  if (bold) p.setAttribute("stroke-width", 2);
  grid.appendChild(p);
}

for (let i = 0; i < BED; i += 10) {
  line(i, 0, i, BED, i % 50 === 0);
  line(0, i, BED, i, i % 50 === 0);
}
line(BED, 0, BED, BED);
line(0, BED, BED, BED);
```
